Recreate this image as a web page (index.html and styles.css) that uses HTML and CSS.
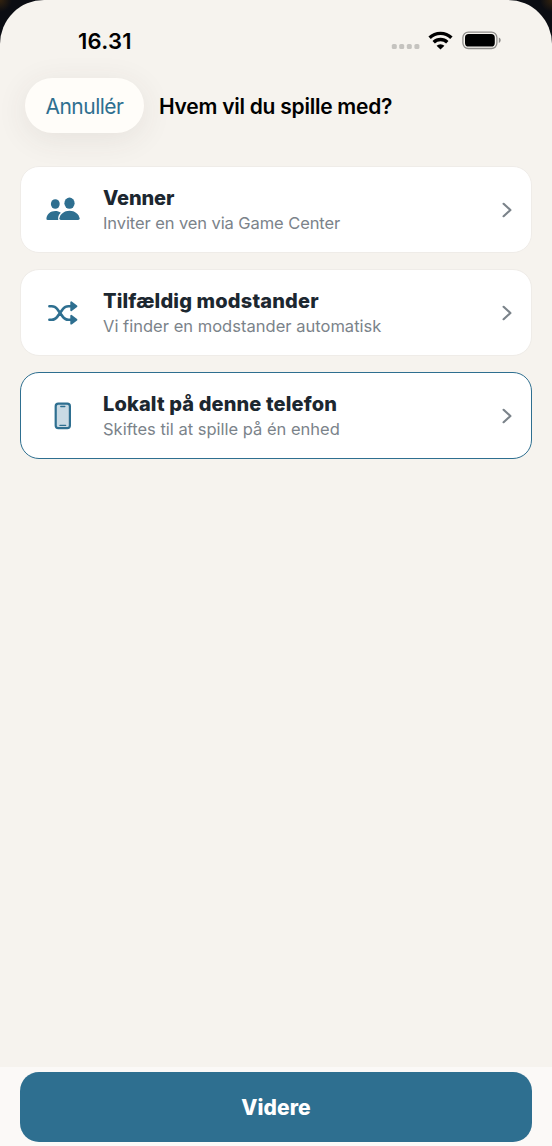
FILE: index.html
```html
<!DOCTYPE html>
<html lang="da">
<head>
<meta charset="utf-8">
<title>Hvem vil du spille med?</title>
<link rel="stylesheet" href="styles.css">
</head>
<body>
<div class="screen">
  <div class="status">
    <span class="time">16.31</span>
    <svg class="status-icons" width="112" height="22" viewBox="0 0 112 22">
      <g fill="#c5c3bf"><rect x="1.8" y="14" width="5" height="5" rx="1.6"/><rect x="9.2" y="14" width="5" height="5" rx="1.6"/><rect x="16.8" y="14" width="5" height="5" rx="1.6"/><rect x="24.4" y="14" width="5" height="5" rx="1.6"/></g>
      <g fill="none" stroke="#000" stroke-width="3.4"><path d="M39.6 7.8a15.6 15.6 0 0 1 21.8 0"/><path d="M43.7 12.3a9.8 9.8 0 0 1 13.6 0"/></g>
      <path d="M50.5 19.6l-3.9-3.9a5.8 5.8 0 0 1 7.8 0z" fill="#000"/>
      <rect x="72.9" y="2.1" width="34" height="16.4" rx="5.4" fill="none" stroke="#8e8c89" stroke-width="1.3"/>
      <rect x="75" y="4.1" width="29.8" height="12.4" rx="3.6" fill="#000"/>
      <path d="M108.8 7.6c2.5.9 2.5 4.5 0 5.4z" fill="#8e8c89"/>
    </svg>
  </div>
  <header class="header">
    <button class="cancel"><span>Annullér</span></button>
    <h1 class="heading">Hvem vil du spille med?</h1>
  </header>
  <main class="options">
    <section class="card">
      <svg class="icon" width="40" height="32" viewBox="0 0 40 32">
        <g fill="#2e6f90"><ellipse cx="12.3" cy="10" rx="4.4" ry="4.8"/><ellipse cx="26.5" cy="9.2" rx="5.1" ry="5.6"/><path d="M15.3 26.1H5q-1.9 0-1.6-1.9c.7-4.4 4.3-7.2 8.9-7.2 2.1 0 4 .6 5.5 1.7-2.2 1.7-3.1 4.5-2.5 7.4z"/><path d="M17.9 26.1q-1.8 0-1.5-1.8c.8-4.4 4.9-7.6 10.1-7.6s9.3 3.2 10.1 7.6q.3 1.8-1.5 1.8z"/></g>
      </svg>
      <div class="copy"><h2 class="title t1">Venner</h2><p class="sub s1">Inviter en ven via Game Center</p></div>
      <svg class="chevron" width="12" height="18" viewBox="0 0 12 18"><path d="M2.6 2.8L9.4 9l-6.8 6.2"/></svg>
    </section>
    <section class="card">
      <svg class="icon" width="40" height="32" viewBox="0 0 40 32">
        <path d="M6.4 9.2h2.4c2.2 0 3.8.8 5.2 2.6l6.1 8.3c1.4 1.8 3 2.6 5.2 2.6H29M6.4 22.7h2.4c2.2 0 3.8-.8 5.2-2.6l6.1-8.3c1.4-1.8 3-2.6 5.2-2.6H29" fill="none" stroke="#2e6f90" stroke-width="2.6" stroke-linecap="round"/>
        <path d="M28.2 5.3v8l5.3-4zM28.2 18.7v8l5.3-4z" fill="#2e6f90" stroke="#2e6f90" stroke-width="1.8" stroke-linejoin="round"/>
      </svg>
      <div class="copy"><h2 class="title t2">Tilfældig modstander</h2><p class="sub s2">Vi finder en modstander automatisk</p></div>
      <svg class="chevron" width="12" height="18" viewBox="0 0 12 18"><path d="M2.6 2.8L9.4 9l-6.8 6.2"/></svg>
    </section>
    <section class="card selected">
      <svg class="icon" width="40" height="32" viewBox="0 0 40 32">
        <rect x="12.7" y="3.7" width="14.2" height="24.4" rx="2.6" fill="#c9dae4" stroke="#2e6f90" stroke-width="2.2"/>
        <path d="M17.8 6.5h4M17 25.4h5.6" fill="none" stroke="#2e6f90" stroke-width="1.4" stroke-linecap="round"/>
      </svg>
      <div class="copy"><h2 class="title t3">Lokalt på denne telefon</h2><p class="sub s3">Skiftes til at spille på én enhed</p></div>
      <svg class="chevron" width="12" height="18" viewBox="0 0 12 18"><path d="M2.6 2.8L9.4 9l-6.8 6.2"/></svg>
    </section>
  </main>
  <footer class="footer"><button class="next"><span>Videre</span></button></footer>
</div>
</body>
</html>
```

FILE: styles.css
```css
* { box-sizing: border-box; }
body { margin: 0; background: radial-gradient(circle at 0 0, #33230f 0, #0b0d13 12px, transparent 13px), radial-gradient(circle at 100% 0, #33230f 0, #0b0d13 12px, transparent 13px), #0b0d13; font-family: Inter, "Liberation Sans", sans-serif; }
h1, h2, p { margin: 0; }
button { border: 0; padding: 0; font-family: inherit; }
.screen { height: 1146px; display: flex; flex-direction: column; background: #f6f3ee; border-radius: 44px 44px 0 0; overflow: hidden; }
.status { height: 78px; display: flex; justify-content: space-between; align-items: flex-start; padding: 27px 50px 0 78px; }
.time { font-size: 22px; line-height: 28px; font-weight: 600; letter-spacing: 0.3px; color: #000; }
.status-icons { margin-top: 3px; }
.header { height: 55px; display: flex; align-items: center; padding-left: 25px; gap: 15px; }
.cancel { width: 119px; height: 55px; border-radius: 28px; background: #fffdf9; color: #2e6f90; font-size: 21px; line-height: 28px; letter-spacing: -0.5px; box-shadow: 0 6px 32px rgba(70, 60, 50, .09); white-space: nowrap; }
.cancel span { display: block; padding-top: 2px; }
.heading { padding-top: 2px; font-size: 21px; line-height: 28px; font-weight: 600; letter-spacing: -0.25px; color: #000; white-space: nowrap; }
.options { flex: 1; display: flex; flex-direction: column; gap: 16px; padding: 33px 20px 0; }
.card { height: 87px; flex: none; display: flex; align-items: center; padding: 0 18px 0 22px; border: 1px solid #efece8; border-radius: 19px; background: #fff; }
.card.selected { border: 1.5px solid #2e6f90; }
.icon { flex: none; }
.copy { flex: 1; padding: 2px 0 0 20px; white-space: nowrap; }
.title { font-size: 20px; line-height: 26px; font-weight: 800; color: #1c2730; }
.t1 { letter-spacing: -.1px; }
.t2 { letter-spacing: .16px; }
.t3 { letter-spacing: .13px; }
.sub { font-size: 16.5px; line-height: 25px; font-weight: 400; color: #7b838a; }
.s1 { letter-spacing: -.09px; }
.s2 { letter-spacing: .02px; }
.s3 { letter-spacing: 0; }
.chevron { flex: none; fill: none; stroke: #7b838a; stroke-width: 2.2; stroke-linecap: round; stroke-linejoin: round; }
.footer { height: 79px; padding: 5px 20px 0; background: #fbf9f7; }
.next { display: block; width: 100%; height: 70px; border-radius: 19px; background: #2e6f90; color: #fff; font-size: 21px; font-weight: 800; line-height: 28px; letter-spacing: .1px; }
.next span { display: block; padding-top: 1px; }
```
